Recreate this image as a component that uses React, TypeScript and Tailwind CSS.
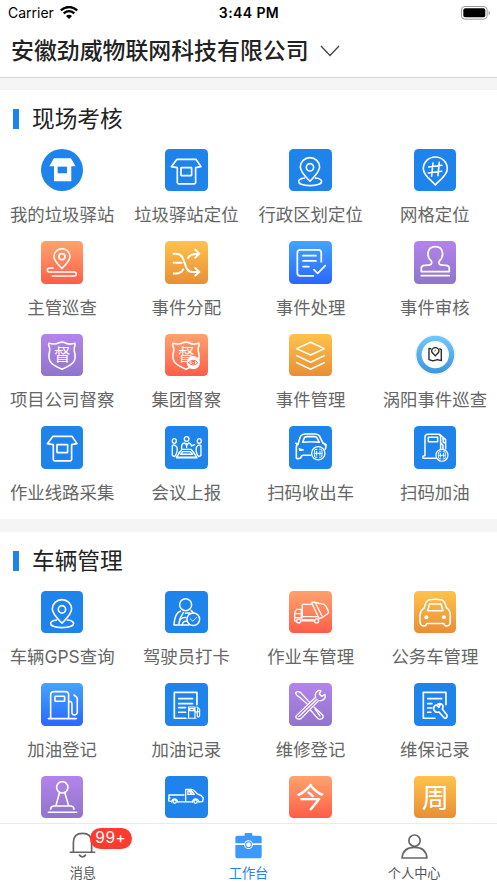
import type { ReactNode } from "react";

type Item = {
  label: string;
  tile: string;
  icon: ReactNode;
};

const BLUE = "rounded-[4.5px] bg-[#1f83ec]";
const SKY = "rounded-[4.5px] bg-linear-to-b from-[#46a3ff] to-[#2c66ff]";
const ORANGE = "rounded-[4.5px] bg-linear-to-b from-[#ffa26d] to-[#ff5c49]";
const YELLOW = "rounded-[4.5px] bg-linear-to-b from-[#fdc34b] to-[#e98e36]";
const PURPLE = "rounded-[4.5px] bg-linear-to-b from-[#b384ec] to-[#9075cb]";
const CIRCLE = "rounded-full bg-[#1f83ec]";

// every icon is drawn on a 128 x 128 grid
function Icon({ children, width = 4.8 }: { children: ReactNode; width?: number }) {
  return (
    <svg
      viewBox="0 0 128 128"
      className="block size-full overflow-visible"
      fill="none"
      stroke="#fff"
      strokeWidth={width}
      strokeLinecap="round"
      strokeLinejoin="round"
    >
      {children}
    </svg>
  );
}

function Glyph({ char, size, y }: { char: string; size: number; y: number }) {
  return (
    <text
      x="64"
      y={y}
      fontSize={size}
      textAnchor="middle"
      fill="#fff"
      stroke="none"
      fontFamily="'Noto Sans CJK SC', sans-serif"
    >
      {char}
    </text>
  );
}

const houseSolid = (
  <Icon>
    <path d="M39 28H90L104 52H91V97H39V52H25Z" fill="#fff" stroke="none" />
    <rect x="50" y="53" width="28" height="20" fill="#1f83ec" stroke="none" />
  </Icon>
);

const house = (
  <Icon width={5}>
    <path d="M36 31H93L108 53L92 56V101Q92 105 88 105H41Q37 105 37 101V56L19 53Z" />
    <rect x="48" y="56" width="32" height="24" rx="1" />
  </Icon>
);

const pin = (
  <Icon>
    <path d="M63 97C54 87 34 69 34 54A29 28 0 0 1 92 54C92 69 72 87 63 97Z" />
    <circle cx="63" cy="55" r="11" />
    <path d="M47 87C37 88 29 92 29 98C29 105 43 110 63 110S98 105 98 98C98 92 90 88 79 87" />
  </Icon>
);

const gridPin = (
  <Icon>
    <path d="M64 108C54 95 28 80 28 59A36 35 0 0 1 100 59C100 80 74 95 64 108Z" />
    <path d="M57 42L53 82M76 40L72 80M44 54L84 49M43 72L83 67" />
  </Icon>
);

const patrol = (
  <Icon>
    <path d="M63 83C55 73 39 60 39 47A24 24 0 0 1 87 47C87 60 71 73 63 83Z" />
    <circle cx="63" cy="47" r="9" />
    <path d="M36 81H25A5 5 0 0 0 25 93H100A5 5 0 0 1 100 105H34" />
  </Icon>
);

const shuffle = (
  <Icon width={6}>
    <path d="M26 38H34C66 38 52 93 82 93H102M91 81L103 93L91 104" />
    <path d="M26 65H50M26 98H34C46 98 51 92 55 85M69 51C74 41 82 38 101 38M91 26L103 38L91 50" />
  </Icon>
);

const checklist = (
  <Icon width={5.2}>
    <path d="M73 105H34Q25 105 25 96V36Q25 27 34 27H88Q97 27 97 36V62M42 44H81M42 60H81M42 77H60M75 86L86 97L109 74" />
  </Icon>
);

const stamp = (
  <Icon width={5.2}>
    <path d="M52 60C37 48 38 17 64 17S91 48 76 60C72 71 78 73 96 73Q106 73 106 82V92H22V82Q22 73 32 73C50 73 56 71 52 60ZM22 104H106" />
  </Icon>
);

const shieldPath =
  "M24 28C36 31 45 31 52 27Q63 22 74 27C81 31 92 31 102 28C105 34 98 38 100 51C109 84 94 92 63 106C32 92 18 84 26 51C29 38 19 34 24 28Z";

const shield = (
  <Icon>
    <path d={shieldPath} />
    <Glyph char="督" size={50} y={82} />
  </Icon>
);

const shieldEye = (
  <Icon>
    <path d={shieldPath} />
    <Glyph char="督" size={50} y={82} />
    <circle cx="85" cy="86" r="20" fill="#fff" stroke="none" />
    <path d="M71 86Q85 71 99 86Q85 101 71 86Z" stroke="#ff6c54" strokeWidth="3" />
    <circle cx="85" cy="86" r="4" stroke="#ff6c54" strokeWidth="4" />
  </Icon>
);

const meeting = (
  <Icon width={4}>
    <circle cx="65" cy="39" r="7" />
    <ellipse cx="28" cy="45" rx="6" ry="7" />
    <ellipse cx="103" cy="45" rx="6" ry="7" />
    <path d="M50 69V60Q51 52 59 51L65 58L71 51Q78 52 80 60L89 56M65 53V64" />
    <path d="M22 60V89L29 92Q39 79 36 64Q31 55 22 58ZM108 60V89L101 92Q91 79 94 64Q99 55 108 58Z" />
    <path d="M51 70H79L96 94H34ZM43 78L35 96H96L86 78M53 77H76L83 85H47Z" />
  </Icon>
);

const layers = (
  <Icon>
    <path d="M65 25L106 44L65 63L23 44ZM23 65L65 85L106 65M23 86L65 106L106 86" />
  </Icon>
);

const mapBadge = (
  <svg viewBox="0 0 128 128" className="block size-full" fill="none">
    <defs>
      <linearGradient id="ring" x1="0" y1="0" x2="0" y2="1">
        <stop offset="0" stopColor="#70c8fc" />
        <stop offset="1" stopColor="#3a97dc" />
      </linearGradient>
    </defs>
    <circle cx="64" cy="63" r="60" fill="#fff" stroke="#ececec" strokeWidth="2" />
    <circle cx="64" cy="62" r="57" fill="url(#ring)" />
    <circle cx="64" cy="62" r="41" fill="#fff" />
    <g stroke="#252525" strokeWidth="4" strokeLinejoin="round">
      <path d="M52 45L45 43V77L57 81L70 77L82 80V47L76 44" />
      <path d="M64 66C60 60 53 57 53 51A11 10 0 0 1 75 51C75 57 68 60 64 66Z" />
      <path d="M61 51L66 48" strokeWidth="2" />
    </g>
  </svg>
);

function ScanMark({ x, y, r }: { x: number; y: number; r: number }) {
  return (
    <g transform={`translate(${x} ${y}) scale(${r / 20})`}>
      <circle r="20" fill="#1f83ec" strokeWidth="4" />
      <path
        d="M-11 -3V-9Q-11 -12 -7 -12H-4M4 -12H7Q11 -12 11 -9V-3M-11 4V9Q-11 12 -7 12H-4M4 12H7Q11 12 11 9V4M-13 0H13M-5 -6V6M5 -6V6"
        strokeWidth="3"
      />
    </g>
  );
}

const carScan = (
  <Icon>
    <path d="M28 52L33 35Q36 25 48 24H79Q91 25 94 35L101 50Q110 53 111 62L109 70M28 52Q21 56 22 68V96Q23 99 27 98L35 96Q37 88 43 88H65" />
    <path d="M41 49L46 35Q48 32 54 32H77Q82 32 85 37L91 49Q65 46 41 49ZM20 52L28 55M103 52L112 57" />
    <path d="M31 68L44 72L33 74Z" fill="#fff" strokeWidth="3" />
    <ScanMark x={88} y={82} r={20} />
  </Icon>
);

const pumpScan = (
  <Icon width={4.5}>
    <path d="M67 97H27V91L33 89V34Q33 25 42 25H72Q80 25 80 34V69" />
    <rect x="43" y="34" width="28" height="13" />
    <path d="M82 53L87 58V70M77 25L95 41V69M87 36L88 49L95 52" />
    <ScanMark x={84} y={88} r={18} />
  </Icon>
);

const driver = (
  <Icon width={4.5}>
    <circle cx="62" cy="41" r="18" />
    <path d="M47 60Q31 66 28 92L27 102H72M61 67L75 66M79 59L86 66" />
    <path d="M42 98Q44 79 62 80M52 101Q54 89 65 91M55 65L44 85" />
    <circle cx="85" cy="85" r="19" fill="#1f83ec" />
    <path d="M76 84L84 91L95 79" strokeWidth="2.5" />
  </Icon>
);

const garbageTruck = (
  <Icon width={4}>
    <path d="M22 90H17V66L23 55H37V83M18 68H37M18 80H37M40 80V40H70L69 34L78 33L99 75M40 77H88M70 40L90 82M78 34L105 40Q114 46 118 61V67L101 79L90 83M40 86H73M38 90H74" />
    <circle cx="29" cy="90" r="6" />
    <circle cx="83" cy="90" r="6" />
  </Icon>
);

const carFront = (
  <Icon width={4.5}>
    <path d="M31 51Q35 27 47 26Q64 24 82 26Q92 28 98 51Q108 57 109 73V91Q109 105 98 105Q91 105 90 98H38Q37 105 30 105Q18 105 18 91V73Q20 57 31 51Z" />
    <path d="M47 39H81L87 59H41Z" />
    <circle cx="37" cy="79" r="6" fill="#fff" stroke="none" />
    <circle cx="90" cy="79" r="6" fill="#fff" stroke="none" />
  </Icon>
);

const pump = (
  <Icon>
    <path d="M22 107H106M29 106V35Q29 26 38 26H74Q83 26 83 35V106M85 56H90Q93 57 93 64V90Q94 96 100 96Q107 96 109 89V47Q109 43 99 36" />
    <rect x="42" y="40" width="29" height="15" rx="2" />
  </Icon>
);

const fuelRecord = (
  <Icon width={5}>
    <path d="M63 106H28V28H96V65M41 47H83M41 62H83M41 74H62M41 88H62" />
    <path d="M69 106H93M71 105V72H90V105M74 77H87V83H74ZM96 72L104 79V98Q102 105 97 100V88L92 86M98 78V86H104" strokeWidth="3.5" />
  </Icon>
);

const tools = (
  <Icon width={4}>
    <path d="M54 62L32 43Q19 35 20 29Q26 23 34 28L46 41L60 56M65 82L87 107Q95 111 101 106Q105 99 99 94L76 73" />
    <path d="M22 98L80 43Q76 29 89 22L96 23L91 33L98 40L108 34Q112 48 97 53L89 53L36 107Q29 111 22 106Q19 103 22 98Z" />
    <path d="M32 99L84 49M28 101H29M78 78L93 99" />
  </Icon>
);

const repairRecord = (
  <Icon width={5}>
    <path d="M63 106H28V28H96V65M41 47H83M41 62H54M41 75H54M41 88H51" />
    <path d="M67 66L75 73L78 66L72 63Q82 60 87 68Q88 73 85 78L99 96Q101 101 97 105Q93 107 90 104L75 87Q61 91 59 77Q59 69 66 66Z" />
  </Icon>
);

const lever = (
  <Icon>
    <circle cx="64" cy="34" r="17" />
    <path d="M55 52L45 89M72 52L83 89M29 100Q29 91 38 90H90Q99 91 99 100M22 109H107" />
  </Icon>
);

const pickup = (
  <Icon width={4}>
    <path d="M20 77L11 75L12 57H57M38 78H83M103 78L113 77L115 66L108 58L97 54Q87 40 78 40H62V77M12 66H15M69 56V44H77Q83 45 88 55H70" />
    <path d="M74 47L78 44L83 49L78 53Z" />
    <path d="M20 78Q21 69 29 69T38 78M83 78Q84 69 92 69T102 78" />
    <circle cx="29" cy="77" r="5" />
    <circle cx="92" cy="77" r="5" />
  </Icon>
);

const today = (
  <Icon>
    <Glyph char="今" size={86} y={97} />
  </Icon>
);

const week = (
  <Icon>
    <Glyph char="周" size={82} y={96} />
  </Icon>
);

const siteItems: Item[] = [
  { label: "我的垃圾驿站", tile: CIRCLE, icon: houseSolid },
  { label: "垃圾驿站定位", tile: BLUE, icon: house },
  { label: "行政区划定位", tile: BLUE, icon: pin },
  { label: "网格定位", tile: BLUE, icon: gridPin },
  { label: "主管巡查", tile: ORANGE, icon: patrol },
  { label: "事件分配", tile: YELLOW, icon: shuffle },
  { label: "事件处理", tile: SKY, icon: checklist },
  { label: "事件审核", tile: PURPLE, icon: stamp },
  { label: "项目公司督察", tile: PURPLE, icon: shield },
  { label: "集团督察", tile: ORANGE, icon: shieldEye },
  { label: "事件管理", tile: YELLOW, icon: layers },
  { label: "涡阳事件巡查", tile: "rounded-full", icon: mapBadge },
  { label: "作业线路采集", tile: BLUE, icon: house },
  { label: "会议上报", tile: BLUE, icon: meeting },
  { label: "扫码收出车", tile: BLUE, icon: carScan },
  { label: "扫码加油", tile: BLUE, icon: pumpScan },
];

const vehicleItems: Item[] = [
  { label: "车辆GPS查询", tile: BLUE, icon: pin },
  { label: "驾驶员打卡", tile: BLUE, icon: driver },
  { label: "作业车管理", tile: ORANGE, icon: garbageTruck },
  { label: "公务车管理", tile: YELLOW, icon: carFront },
  { label: "加油登记", tile: SKY, icon: pump },
  { label: "加油记录", tile: BLUE, icon: fuelRecord },
  { label: "维修登记", tile: PURPLE, icon: tools },
  { label: "维保记录", tile: BLUE, icon: repairRecord },
  { label: "", tile: PURPLE, icon: lever },
  { label: "", tile: BLUE, icon: pickup },
  { label: "", tile: ORANGE, icon: today },
  { label: "", tile: YELLOW, icon: week },
];

function StatusBar() {
  return (
    <div className="grid h-[26px] grid-cols-3 items-center pr-[7px] pl-[8px] text-black">
      <div className="flex items-center gap-[6px]">
        <span className="text-[14px] leading-none">Carrier</span>
        <svg viewBox="0 0 54 40" className="h-[13.3px] w-[18px]" fill="none" stroke="#000" strokeWidth="7">
          <path d="M2 13Q27 -7 52 13M11 22Q27 9 43 22" />
          <path d="M18 30Q27 23 36 30L27 39Z" fill="#000" stroke="none" />
        </svg>
      </div>
      <span className="text-center text-[14px] leading-none font-semibold tracking-[0.4px]">3:44 PM</span>
      <svg viewBox="0 0 88 42" className="ml-auto h-[14px] w-[29.3px]">
        <rect x="1.5" y="1.5" width="77" height="38" rx="10" fill="none" stroke="#999" strokeWidth="3" />
        <rect x="7" y="7" width="66" height="27" rx="6" />
        <path d="M83 14Q87 16 87 21T83 28Z" fill="#999" />
      </svg>
    </div>
  );
}

function Section({ title, items }: { title: string; items: Item[] }) {
  return (
    <section className="shrink-0 bg-white">
      <div className="flex h-[58.5px] items-center gap-[13px] pl-[13px]">
        <span className="h-[20px] w-[6px] bg-[#1f83ec]" />
        <h2 className="text-[22.7px] leading-none text-[#222]">{title}</h2>
      </div>
      <div className="grid auto-rows-[92.65px] grid-cols-4">
        {items.map((item, i) => (
          <div key={i} className="flex flex-col items-center">
            <div className={`size-[42.6px] shrink-0 ${item.tile}`}>{item.icon}</div>
            <span className="mt-[12px] text-[17.4px] leading-[24px] whitespace-nowrap text-[#666]">{item.label}</span>
          </div>
        ))}
      </div>
    </section>
  );
}

function TabBar() {
  return (
    <nav className="grid h-[60px] shrink-0 grid-cols-3 border-t border-[#ebebeb] bg-white text-[13.2px] leading-[18px] text-[#555]">
      <div className="flex flex-col items-center pt-[8px]">
        <div className="relative">
          <svg viewBox="0 0 80 80" className="block size-[27px]" fill="none" stroke="#666" strokeWidth="5">
            <path d="M2 60H78M13 60V31Q13 4 40 4T67 31V60M30 67Q40 80 50 67" />
          </svg>
          <span className="absolute -top-[4.5px] left-[20.5px] flex h-[21.5px] w-[42px] items-center justify-center rounded-full bg-[#ff3b30] text-[15.5px] tracking-[0.5px] text-white">
            99+
          </span>
        </div>
        <span className="mt-[5px]">消息</span>
      </div>
      <div className="flex flex-col items-center pt-[8px] text-[#1f83ec]">
        <svg viewBox="0 0 81 81" className="block size-[27px]" fill="#3d98ff">
          <path d="M29 11V6Q29 3 33 3H48Q52 3 52 6V11H74Q80 11 80 17V34H53Q49 26 40.5 26T28 34H1V17Q1 11 7 11ZM1 39H28Q31 49 40.5 49T53 39H80V73Q80 79 74 79H7Q1 79 1 73Z" />
          <circle cx="40.5" cy="38" r="13" fill="#fff" />
          <circle cx="40.5" cy="38" r="10" />
          <circle cx="40.5" cy="38" r="7" fill="#fff" />
        </svg>
        <span className="mt-[5px]">工作台</span>
      </div>
      <div className="flex flex-col items-center pt-[8px]">
        <svg viewBox="0 0 81 81" className="block size-[27px]" fill="none" stroke="#666" strokeWidth="5">
          <circle cx="40.5" cy="26" r="17" />
          <path d="M3 78H78Q75 46 40.5 46T3 78Z" strokeLinejoin="round" />
        </svg>
        <span className="mt-[5px]">个人中心</span>
      </div>
    </nav>
  );
}

export default function App() {
  return (
    <div className="flex h-screen flex-col overflow-hidden bg-white font-[Inter,'Noto_Sans_CJK_SC',sans-serif]">
      <header className="h-[78px] shrink-0 border-b border-[#d5d5d5]">
        <StatusBar />
        <div className="flex h-[50px] items-center gap-[11px] pl-[11px]">
          <h1 className="text-[22.9px] leading-none font-medium text-[#222]">安徽劲威物联网科技有限公司</h1>
          <svg viewBox="0 0 20 12" className="h-[12px] w-[20px]" fill="none" stroke="#444" strokeWidth="1.3">
            <path d="M1 1L10 10.5L19 1" />
          </svg>
        </div>
      </header>
      <main className="flex min-h-0 flex-1 flex-col gap-[13px] overflow-hidden bg-[#f5f5f5] pt-[12px]">
        <Section title="现场考核" items={siteItems} />
        <Section title="车辆管理" items={vehicleItems} />
      </main>
      <TabBar />
    </div>
  );
}
